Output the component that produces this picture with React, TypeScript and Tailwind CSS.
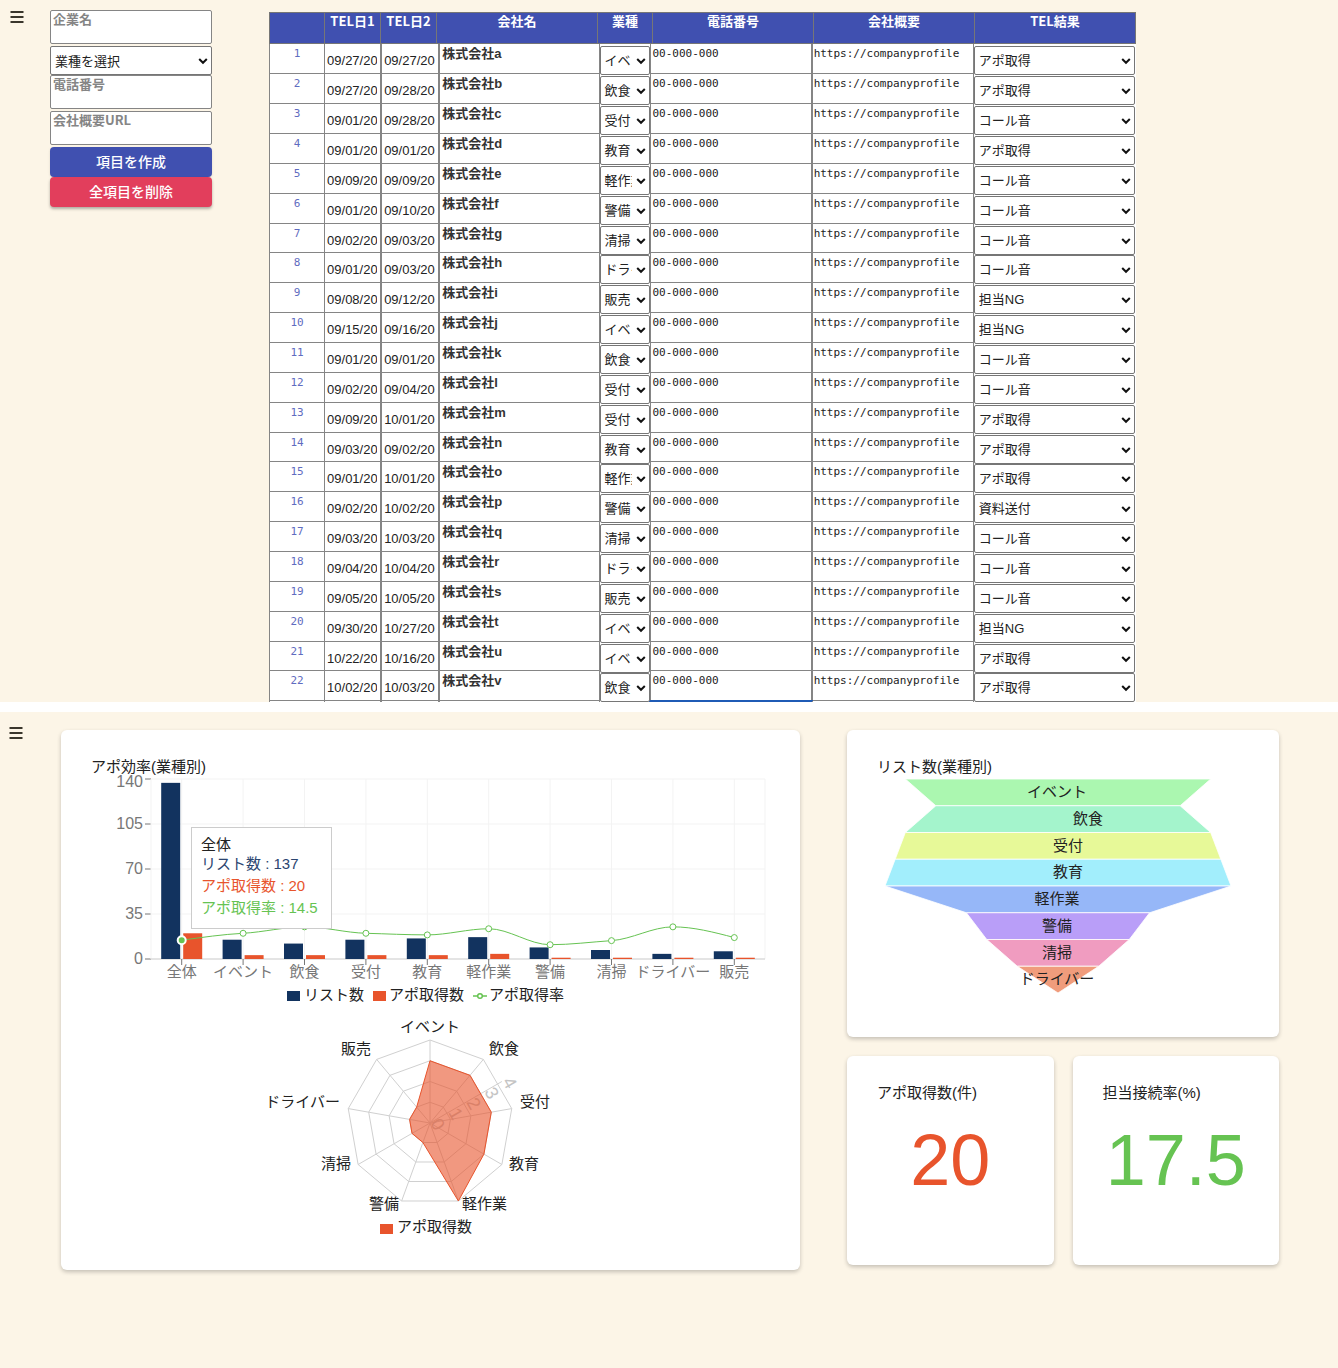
import React from "react";

const INDUSTRIES = ["イベント", "飲食", "受付", "教育", "軽作業", "警備", "清掃", "ドライバー", "販売"];
const RESULTS = ["アポ取得", "コール音", "担当NG", "資料送付"];

type Row = [string, string, string, number, number];

const ROWS: Row[] = [
  ["09/27/2021", "09/27/2021", "a", 0, 0],
  ["09/27/2021", "09/28/2021", "b", 1, 0],
  ["09/01/2021", "09/28/2021", "c", 2, 1],
  ["09/01/2021", "09/01/2021", "d", 3, 0],
  ["09/09/2021", "09/09/2021", "e", 4, 1],
  ["09/01/2021", "09/10/2021", "f", 5, 1],
  ["09/02/2021", "09/03/2021", "g", 6, 1],
  ["09/01/2021", "09/03/2021", "h", 7, 1],
  ["09/08/2021", "09/12/2021", "i", 8, 2],
  ["09/15/2021", "09/16/2021", "j", 0, 2],
  ["09/01/2021", "09/01/2021", "k", 1, 1],
  ["09/02/2021", "09/04/2021", "l", 2, 1],
  ["09/09/2021", "10/01/2021", "m", 2, 0],
  ["09/03/2021", "09/02/2021", "n", 3, 0],
  ["09/01/2021", "10/01/2021", "o", 4, 0],
  ["09/02/2021", "10/02/2021", "p", 5, 3],
  ["09/03/2021", "10/03/2021", "q", 6, 1],
  ["09/04/2021", "10/04/2021", "r", 7, 1],
  ["09/05/2021", "10/05/2021", "s", 8, 1],
  ["09/30/2021", "10/27/2021", "t", 0, 2],
  ["10/22/2021", "10/16/2021", "u", 0, 0],
  ["10/02/2021", "10/03/2021", "v", 1, 0],
];

const HEADERS = ["", "TEL日1", "TEL日2", "会社名", "業種", "電話番号", "会社概要", "TEL結果"];

function MenuButton() {
  return (
    <button type="button" aria-label="メニュー" className="block h-3 w-[14px]">
      <svg viewBox="0 0 14 12" className="block h-3 w-[14px]" stroke="#3a362c" strokeWidth="2">
        <path d="M0.5 1H13.5M0.5 6H13.5M0.5 11H13.5" />
      </svg>
    </button>
  );
}

function Select({
  label,
  options,
  value,
  tight,
}: {
  label: string;
  options: string[];
  value: string;
  tight?: boolean;
}) {
  return (
    <div className="relative h-[29px]">
      <select
        aria-label={label}
        defaultValue={value}
        className={
          tight
            ? "h-full w-full appearance-none rounded-[2px] border border-[#767676] bg-white pr-[17px] pl-[3px] text-[13px] text-[#222]"
            : "h-full w-full appearance-none rounded-[2px] border border-[#767676] bg-white pr-4 pl-1 text-[13px] text-[#222]"
        }
      >
        {options.map((o) => (
          <option key={o}>{o}</option>
        ))}
      </select>
      <svg
        viewBox="0 0 10 8"
        className="pointer-events-none absolute top-[11px] right-1 h-2 w-[10px]"
        fill="none"
        stroke="#111"
        strokeWidth="2"
      >
        <path d="M1.2 2L5 5.8L8.8 2" />
      </svg>
    </div>
  );
}

function FormArea({ label }: { label: string }) {
  return (
    <textarea
      aria-label={label}
      placeholder={label}
      rows={1}
      className="block h-[34px] w-full resize-none overflow-hidden rounded-[2px] border border-[#858585] bg-white px-0.5 text-[13px] leading-4 font-bold placeholder:text-[#858585]"
    />
  );
}

const DATE =
  "block h-full w-full rounded-none border-x border-b border-[#858585] bg-white pt-1 pr-[3px] pl-0.5 text-[13px] text-[#222]";
const NAME =
  "block h-full w-full resize-none overflow-hidden rounded-none border-x border-b border-[#858585] bg-white px-0.5 py-px text-[13px] leading-[18px] font-bold text-[#333]";
const MONO =
  "block h-full w-full resize-none overflow-hidden rounded-none border-x border-b border-[#858585] bg-white px-px py-0.5 font-['DejaVu_Sans_Mono','Noto_Sans_CJK_JP',monospace] text-[11px] leading-4 whitespace-pre text-[#222]";
const MONO_ACTIVE =
  "block h-full w-full resize-none overflow-hidden rounded-none border border-[#1f5bb5] bg-white px-px py-0.5 font-['DejaVu_Sans_Mono','Noto_Sans_CJK_JP',monospace] text-[11px] leading-4 whitespace-pre text-[#222] outline-1 outline-[#1f5bb5]";

function CallTable() {
  const rows: Row[] = [...ROWS, ["", "", "", 2, 1]];
  return (
    <table className="mt-3 mr-[202px] ml-[57px] block min-w-0 flex-1">
      <thead className="block">
        <tr className="grid h-8 grid-cols-[55fr_56fr_56fr_161fr_55fr_161fr_161fr_161fr] border-r border-b border-[#767676] bg-[#4050b0]">
          {HEADERS.map((h, i) => (
            <th
              key={i}
              scope="col"
              className="border-t border-l border-[#767676] text-center font-['Noto_Sans_CJK_JP',sans-serif] text-[13px] leading-4 font-bold text-white"
            >
              {h}
            </th>
          ))}
        </tr>
      </thead>
      <tbody className="block">
        {rows.map(([d1, d2, name, ind, res], i) => (
          <tr
            key={i}
            className="grid h-[30px] grid-cols-[55fr_57fr_58fr_161fr_50fr_161fr_162fr_162fr] grid-rows-[100%] bg-white nth-[7n]:h-[29px]"
          >
            <td className="min-w-0 border-b border-l border-[#858585] pt-px text-center font-['DejaVu_Sans_Mono',monospace] text-[11px] leading-[18px] text-[#5f6cc0]">
              {name && i + 1}
            </td>
            <td className="min-w-0">
              <input aria-label="TEL日1" defaultValue={d1} className={DATE} />
            </td>
            <td className="min-w-0">
              <input aria-label="TEL日2" defaultValue={d2} className={DATE} />
            </td>
            <td className="min-w-0">
              <textarea
                aria-label="会社名"
                rows={1}
                defaultValue={name && "株式会社" + name}
                className={NAME}
              />
            </td>
            <td className="min-w-0 pt-0.5">
              <Select label="業種" options={INDUSTRIES} value={INDUSTRIES[ind]} tight />
            </td>
            <td className="min-w-0">
              <textarea
                aria-label="電話番号"
                rows={1}
                defaultValue={name && "00-000-000"}
                className={name ? MONO : MONO_ACTIVE}
              />
            </td>
            <td className="min-w-0">
              <textarea
                aria-label="会社概要"
                rows={1}
                defaultValue={name && "https://companyprofile"}
                className={MONO}
              />
            </td>
            <td className="min-w-0 pt-0.5 pr-px">
              <Select label="TEL結果" options={RESULTS} value={RESULTS[res]} />
            </td>
          </tr>
        ))}
      </tbody>
    </table>
  );
}

const NAVY = "#12335f";
const ORANGE = "#e8542c";
const GREEN = "#66c352";

const CATEGORIES = ["全体", ...INDUSTRIES];
const LISTED = [137, 15, 12, 15, 16, 17, 9, 7, 4, 6];
const APPOINTED = [20, 3, 3, 3, 3, 4, 1, 1, 1, 1];
const RATE = APPOINTED.map((a, i) => (a / LISTED[i]) * 100);

function monotonePath(p: [number, number][]) {
  const n = p.length;
  const s = p.slice(1).map((q, i) => (q[1] - p[i][1]) / (q[0] - p[i][0]));
  const t = p.map((_, i) => {
    if (i === 0 || i === n - 1) return 0;
    const a = s[i - 1];
    const b = s[i];
    return a * b <= 0 ? 0 : Math.sign(a) * Math.min(Math.abs(a), Math.abs(b), Math.abs(a + b) / 4);
  });
  t[0] = (3 * s[0] - t[1]) / 2;
  t[n - 1] = (3 * s[n - 2] - t[n - 2]) / 2;
  let d = `M${p[0][0]},${p[0][1]}`;
  for (let i = 1; i < n; i++) {
    const h = (p[i][0] - p[i - 1][0]) / 3;
    d += `C${p[i - 1][0] + h},${p[i - 1][1] + h * t[i - 1]} ${p[i][0] - h},${p[i][1] - h * t[i]} ${p[i][0]},${p[i][1]}`;
  }
  return d;
}

function BarChart() {
  const left = 60;
  const right = 674;
  const base = 181;
  const band = (right - left) / CATEGORIES.length;
  const cx = (i: number) => left + band * (i + 0.5);
  const y = (v: number) => base - (v * 180) / 140;
  const pts = RATE.map((r, i) => [cx(i), y(r)] as [number, number]);
  return (
    <svg viewBox="0 0 679 232" className="block w-full overflow-visible text-[15px]" role="img" aria-label="アポ効率">
      {[0, 35, 70, 105, 140].map((v) => (
        <g key={v}>
          <path d={`M${left} ${y(v)}H${right}`} stroke="#f3f3f3" />
          <path d={`M${left - 6} ${y(v)}H${left}`} stroke="#777" />
          <text x={left - 8} y={v === 140 ? y(v) + 8 : y(v) + 5} textAnchor="end" fill="#777" className="text-[16px]">
            {v}
          </text>
        </g>
      ))}
      <path d={`M${left} 1V${base}M${right} 1V${base}`} stroke="#f3f3f3" />
      <path d={`M${left} ${base}H${right}`} stroke="#cfcfcf" />
      {CATEGORIES.map((c, i) => (
        <g key={c}>
          <path d={`M${cx(i)} 1V${base}`} stroke="#f3f3f3" />
          <path d={`M${cx(i)} ${base}V${base + 6}`} stroke="#777" />
          <text x={cx(i)} y="199" textAnchor="middle" fill="#777">
            {c}
          </text>
          <rect x={cx(i) - 20.5} y={y(LISTED[i])} width="19" height={base - y(LISTED[i])} fill={NAVY} />
          <rect x={cx(i) + 1.5} y={y(APPOINTED[i])} width="19" height={base - y(APPOINTED[i])} fill={ORANGE} />
        </g>
      ))}
      <path d={monotonePath(pts)} fill="none" stroke={GREEN} />
      {pts.map(([px, py], i) =>
        i === 0 ? (
          <circle key={i} cx={px} cy={py} r="4" fill={GREEN} stroke="#fff" strokeWidth="2" />
        ) : (
          <circle key={i} cx={px} cy={py} r="3" fill="#fff" stroke={GREEN} />
        ),
      )}
      <rect x="196" y="213" width="13" height="10" fill={NAVY} />
      <text x="213" y="222" fill="#222">
        リスト数
      </text>
      <rect x="282" y="213" width="13" height="10" fill={ORANGE} />
      <text x="298" y="222" fill="#222">
        アポ取得数
      </text>
      <path d="M382 218H396" stroke={GREEN} strokeWidth="1.5" />
      <circle cx="389" cy="218" r="2.3" fill="#fff" stroke={GREEN} strokeWidth="1.5" />
      <text x="398" y="222" fill="#222">
        アポ取得率
      </text>
    </svg>
  );
}

function Tooltip() {
  return (
    <div className="absolute top-[49px] left-[100px] min-w-[141px] border border-[#ccc] bg-white p-[9px] text-[15px] whitespace-nowrap">
      <p className="leading-4 text-[#222]">全体</p>
      <ul className="leading-[22px]">
        <li className="text-[#2b4570]">リスト数 : 137</li>
        <li className="text-[#e8542c]">アポ取得数 : 20</li>
        <li className="text-[#66c352]">アポ取得率 : 14.5</li>
      </ul>
    </div>
  );
}

function RadarChart() {
  const cx = 339;
  const cy = 113;
  const unit = 83 / 4;
  const pt = (i: number, r: number) => {
    const a = (i * 2 * Math.PI) / 9;
    return `${cx + r * Math.sin(a)},${cy - r * Math.cos(a)}`;
  };
  const labels: [number, number, "start" | "middle" | "end"][] = [
    [339, 22, "middle"],
    [398, 44, "start"],
    [429, 97, "start"],
    [418, 159, "start"],
    [371, 199, "start"],
    [308, 199, "end"],
    [260, 159, "end"],
    [249, 97, "end"],
    [280, 44, "end"],
  ];
  const cos = Math.cos(Math.PI / 6);
  return (
    <svg viewBox="0 0 679 234" className="block w-full text-[15px]" role="img" aria-label="アポ取得数">
      <g fill="none" stroke="#d0d0d0">
        {[1, 2, 3, 4].map((k) => (
          <polygon key={k} points={INDUSTRIES.map((_, i) => pt(i, unit * k)).join(" ")} />
        ))}
        {INDUSTRIES.map((c, i) => (
          <path key={c} d={`M${cx},${cy}L${pt(i, 83)}`} />
        ))}
        <path d={`M${cx},${cy}L${cx + 83 * cos},${cy - 41.5}`} />
      </g>
      {[0, 1, 2, 3, 4].map((k) => {
        const x = cx + unit * k * cos;
        const y = cy - (unit * k) / 2;
        return (
          <text key={k} x={x} y={y} transform={`rotate(60 ${x} ${y})`} fill="#c4c4c4" className="text-[18px]">
            {k}
          </text>
        );
      })}
      <polygon
        points={APPOINTED.slice(1)
          .map((v, i) => pt(i, v * unit))
          .join(" ")}
        fill={ORANGE}
        fillOpacity="0.6"
        stroke={ORANGE}
      />
      {INDUSTRIES.map((c, i) => (
        <text key={c} x={labels[i][0]} y={labels[i][1]} textAnchor={labels[i][2]} fill="#222">
          {c}
        </text>
      ))}
      <rect x="289" y="214" width="13" height="10" fill={ORANGE} />
      <text x="306" y="222" fill="#222">
        アポ取得数
      </text>
    </svg>
  );
}

const FUNNEL: [string, number, string, number][] = [
  ["イベント", 15, "#abf7b0", 180],
  ["飲食", 12, "#a4f4cc", 211],
  ["受付", 15, "#e7f998", 191],
  ["教育", 16, "#a2eefc", 191],
  ["軽作業", 17, "#96b7f8", 180],
  ["警備", 9, "#b99ef8", 180],
  ["清掃", 7, "#f09cc0", 180],
  ["ドライバー", 4, "#f09c7c", 180],
];

function FunnelChart() {
  const h = 214 / 8;
  const half = (i: number) => ((FUNNEL[i]?.[1] ?? 0) * 173) / 17;
  return (
    <svg viewBox="0 0 372 233" className="block w-full text-[15px]" role="img" aria-label="リスト数">
      {FUNNEL.map(([name, , color], i) => (
        <polygon
          key={name}
          points={`${181 - half(i)},${1 + h * i} ${181 + half(i)},${1 + h * i} ${181 + half(i + 1)},${1 + h * (i + 1)} ${181 - half(i + 1)},${1 + h * (i + 1)}`}
          fill={color}
          stroke="#fff"
          strokeOpacity="0.8"
        />
      ))}
      {FUNNEL.map(([name, , , x], i) => (
        <text key={name} x={x} y={19 + h * i} textAnchor="middle" fill="#222">
          {name}
        </text>
      ))}
    </svg>
  );
}

function Card({ title, children }: { title: string; children: React.ReactNode }) {
  return (
    <section className="rounded-md bg-white px-[30px] py-[26px] shadow-[0_2px_4px_rgba(0,0,0,0.22)]">
      <h2 className="text-[15px] leading-[22px] whitespace-nowrap text-[#222]">{title}</h2>
      {children}
    </section>
  );
}

export default function App() {
  return (
    <div className="min-h-screen bg-white font-['Liberation_Sans','Noto_Sans_CJK_JP',sans-serif]">
      <section className="flex max-h-[702px] items-start overflow-hidden bg-[#fcf5e7]">
        <div className="w-[50px] shrink-0 pt-[11px] pl-[10px]">
          <MenuButton />
        </div>
        <form className="flex w-[162px] shrink-0 flex-col gap-0.5 pt-[10px] font-['Noto_Sans_CJK_JP',sans-serif]">
          <FormArea label="企業名" />
          <div>
            <Select label="業種" options={["業種を選択", ...INDUSTRIES]} value="業種を選択" />
            <FormArea label="電話番号" />
          </div>
          <FormArea label="会社概要URL" />
          <div className="text-sm font-medium text-white">
            <button type="button" className="block h-[30px] w-full rounded bg-[#4050b0] pb-0.5 shadow-sm">
              項目を作成
            </button>
            <button
              type="button"
              className="block h-[30px] w-full rounded bg-[#e23e5c] pb-0.5 shadow-[0_2px_3px_rgba(0,0,0,0.3)]"
            >
              全項目を削除
            </button>
          </div>
        </form>
        <CallTable />
      </section>

      <section className="mt-[10px] flex min-h-[656px] items-start bg-[#fcf5e7] pr-[59px] pb-10">
        <div className="w-[61px] shrink-0 pt-[15px] pl-[9px]">
          <MenuButton />
        </div>
        <div className="grid flex-1 grid-cols-[739fr_432fr] items-start gap-[47px] pt-[18px]">
          <Card title="アポ効率(業種別)">
            <div className="relative">
              <BarChart />
              <Tooltip />
            </div>
            <RadarChart />
          </Card>
          <div className="grid gap-[19px]">
            <Card title="リスト数(業種別)">
              <FunnelChart />
            </Card>
            <div className="grid grid-cols-2 gap-[19px]">
              <Card title="アポ取得数(件)">
                <p className="mt-4 mb-[39px] text-center text-[72px] leading-[80px] text-[#e8542c]">20</p>
              </Card>
              <Card title="担当接続率(%)">
                <p className="mt-4 mb-[39px] text-center text-[72px] leading-[80px] text-[#66c352]">17.5</p>
              </Card>
            </div>
          </div>
        </div>
      </section>
    </div>
  );
}
